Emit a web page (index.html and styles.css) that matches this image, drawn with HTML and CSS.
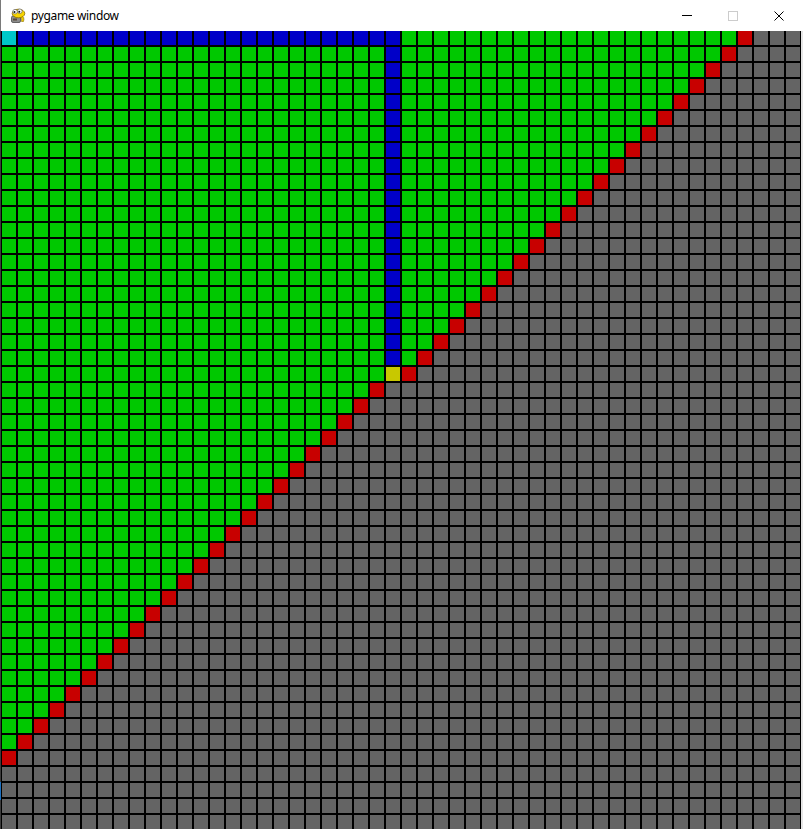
FILE: index.html
```html
<!DOCTYPE html>
<html lang="en">
<head>
<meta charset="utf-8">
<title>pygame window</title>
<link rel="stylesheet" href="styles.css">
</head>
<body>
<div class="window">
  <div class="titlebar">
    <svg class="app-icon" viewBox="0 0 16 16" width="16" height="17">
      <rect x="1.5" y="8.5" width="9" height="6.5" rx="1.5" fill="#8d8d8d" stroke="#4a4a4a" stroke-width="0.8"/>
      <rect x="3" y="11" width="4" height="2" fill="#5a4a3a"/>
      <path d="M11 8 Q15 9 13.5 14 L11.5 14 Q12.5 10.5 10 10 Z" fill="#f2cf00" stroke="#8a6f00" stroke-width="0.6"/>
      <ellipse cx="8.5" cy="6" rx="6.3" ry="4.3" fill="#f7d400" stroke="#8a6f00" stroke-width="0.8"/>
      <circle cx="5" cy="4.2" r="2.3" fill="#fff" stroke="#555" stroke-width="0.6"/>
      <circle cx="9.8" cy="3.8" r="2.3" fill="#fff" stroke="#555" stroke-width="0.6"/>
      <circle cx="4.5" cy="4.6" r="1" fill="#111"/>
      <circle cx="9.3" cy="4.2" r="1" fill="#111"/>
    </svg>
    <span class="title">pygame window</span>
    <div class="controls">
      <div class="ctl"><span class="min-line"></span></div>
      <div class="ctl"><span class="max-box"></span></div>
      <div class="ctl">
        <svg class="close-x" viewBox="0 0 10 10" width="10" height="10">
          <path d="M0.5 0.5 L9.5 9.5 M9.5 0.5 L0.5 9.5" stroke="#000" stroke-width="1" fill="none"/>
        </svg>
      </div>
    </div>
  </div>
  <div class="board" id="board"></div>
</div>
<script src="script.js"></script>
</body>
</html>
```

FILE: styles.css
```css
html, body {
  margin: 0;
  padding: 0;
}

body {
  width: 803px;
  height: 829px;
  overflow: hidden;
  background: linear-gradient(to bottom,
    #7a7a7a 0, #7a7a7a 31px,
    #3c3c3c 31px, #3c3c3c 782px,
    #1b6fbf 782px, #1b6fbf 800px,
    #3c3c3c 800px);
  font-family: "Noto Sans", "Open Sans", "Liberation Sans", sans-serif;
}

.window {
  margin-left: 1px;
  width: 802px;
  background: #e6e6e6;
}

.titlebar {
  height: 31px;
  background: #ffffff;
  display: flex;
  align-items: center;
}

.app-icon {
  display: block;
  margin-left: 9px;
  flex: none;
}

.title {
  margin-left: 5px;
  font-size: 12px;
  letter-spacing: -0.35px;
  color: #000000;
  line-height: 16px;
  padding-top: 1px;
}

.controls {
  margin-left: auto;
  display: flex;
  height: 100%;
  padding-right: 1px;
}

.ctl {
  width: 46px;
  display: flex;
  align-items: center;
  justify-content: center;
}

.min-line {
  display: block;
  width: 10px;
  height: 1px;
  background: #000000;
}

.max-box {
  display: block;
  width: 8px;
  height: 8px;
  border: 1px solid #cccccc;
}

.close-x {
  display: block;
}

.board {
  display: grid;
  grid-template-columns: repeat(50, 14px);
  grid-auto-rows: 14px;
  gap: 2px;
  padding: 0 1px 1px 1px;
  width: 798px;
  background: #000000;
}

.cell {
  background: #646464;
}

.cell.g { background: #00c800; }
.cell.b { background: #0000c8; }
.cell.r { background: #c80000; }
.cell.c { background: #00c8c8; }
.cell.y { background: #c8c800; }
```

FILE: script.js
```js
(function () {
  var board = document.getElementById('board');
  var frag = document.createDocumentFragment();
  for (var r = 0; r < 50; r++) {
    for (var c = 0; c < 50; c++) {
      var s = r + c;
      var cls = '';
      if (r === 0 && c === 0) cls = 'c';
      else if (r === 0 && c <= 24) cls = 'b';
      else if (c === 24 && r <= 20) cls = 'b';
      else if (c === 24 && r === 21) cls = 'y';
      else if (r <= 21) cls = s < 46 ? 'g' : (s === 46 ? 'r' : '');
      else cls = s < 45 ? 'g' : (s === 45 ? 'r' : '');
      var d = document.createElement('div');
      d.className = cls ? 'cell ' + cls : 'cell';
      frag.appendChild(d);
    }
  }
  board.appendChild(frag);
})();
```
